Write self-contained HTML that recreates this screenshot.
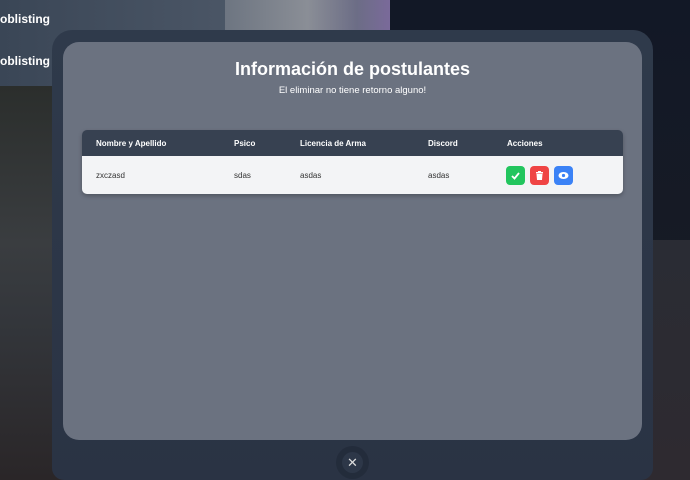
<!DOCTYPE html>
<html><head><meta charset="utf-8"><style>
*{margin:0;padding:0;box-sizing:border-box}
html{width:690px;height:480px;overflow:hidden}
body{width:690px;height:480px;overflow:hidden;position:relative;font-family:"Liberation Sans",sans-serif;
background:linear-gradient(180deg,#121826 0%,#171b25 55%,#2a2426 100%);}
.bgl{position:absolute;left:0;top:0;width:230px;height:86px;background:linear-gradient(90deg,#3a4656,#4b5666);}
.bgl2{position:absolute;left:0;top:86px;width:60px;height:394px;background:linear-gradient(180deg,#2b2e2c 0%,#3a3d40 40%,#33363b 60%,#2a2628 100%);}
.bldg{position:absolute;left:225px;top:0;width:165px;height:40px;background:linear-gradient(90deg,#6d7581,#8a8e96 50%,#6c6d86 80%,#7a6a9a);}
.bgr{position:absolute;left:640px;top:240px;width:50px;height:240px;background:linear-gradient(180deg,#2a2c34,#2e2a30);}
.lt{position:absolute;color:#fff;font-size:12px;font-weight:bold;left:0}
.frame{position:absolute;left:52px;top:30px;width:601px;height:450px;border-radius:20px 20px 12px 12px;background:linear-gradient(180deg,#2f3a4b,#2a3344);}
.panel{position:absolute;left:63px;top:42px;width:579px;height:398px;border-radius:16px;background:#6b7280;}
h1{position:absolute;left:0;right:0;top:17px;text-align:center;color:#fff;font-size:18px;font-weight:bold}
.sub{position:absolute;left:0;right:0;top:43px;text-align:center;color:#fff;font-size:9.5px}
.tbl{position:absolute;left:19px;top:88px;width:541px;height:64px;border-radius:5px;overflow:hidden;box-shadow:0 2px 4px rgba(0,0,0,.25)}
.hd{height:26px;background:#374151;color:#fff;font-size:8px;font-weight:bold;position:relative}
.rw{height:38px;background:#f3f4f6;color:#333;font-size:8px;position:relative}
.hd span{position:absolute;top:9px}
.rw span{position:absolute;top:15px}
.b{position:absolute;top:10px;width:19px;height:19px;border-radius:4px}
.x{position:absolute;left:336px;top:446px;width:33px;height:33px;border-radius:50%;background:#232c3b;}
.x div{position:absolute;left:6px;top:6px;width:21px;height:21px;border-radius:50%;background:#2d3748;color:#ddd;font-size:13px;text-align:center;line-height:21px}
</style></head><body>
<div class="bgl"></div><div class="bgl2"></div><div class="bldg"></div><div class="bgr"></div>
<div class="lt" style="top:12px">oblisting</div>
<div class="lt" style="top:54px">oblisting</div>
<div class="frame"></div>
<div class="panel">
<h1>Información de postulantes</h1>
<div class="sub">El eliminar no tiene retorno alguno!</div>
<div class="tbl">
<div class="hd"><span style="left:14px">Nombre y Apellido</span><span style="left:152px">Psico</span><span style="left:218px">Licencia de Arma</span><span style="left:346px">Discord</span><span style="left:425px">Acciones</span></div>
<div class="rw"><span style="left:14px">zxczasd</span><span style="left:152px">sdas</span><span style="left:218px">asdas</span><span style="left:346px">asdas</span>
<div class="b" style="left:424px;background:#22c55e"><svg width="19" height="19"><path d="M6 10l2.5 2.5L13 7" stroke="#fff" stroke-width="1.8" fill="none"/></svg></div>
<div class="b" style="left:448px;background:#ef4444"><svg width="19" height="19"><rect x="6" y="6" width="7" height="1.5" fill="#fff"/><rect x="8" y="5" width="3" height="1.5" fill="#fff"/><path d="M6.5 8h6l-.5 6h-5z" fill="#fff"/></svg></div>
<div class="b" style="left:472px;background:#3b82f6"><svg width="19" height="19"><ellipse cx="9.5" cy="9.5" rx="5" ry="3.5" fill="#fff"/><circle cx="9.5" cy="9.5" r="1.6" fill="#3b82f6"/></svg></div>
</div></div>
</div>
<div class="x"><div>✕</div></div>
</body></html>
